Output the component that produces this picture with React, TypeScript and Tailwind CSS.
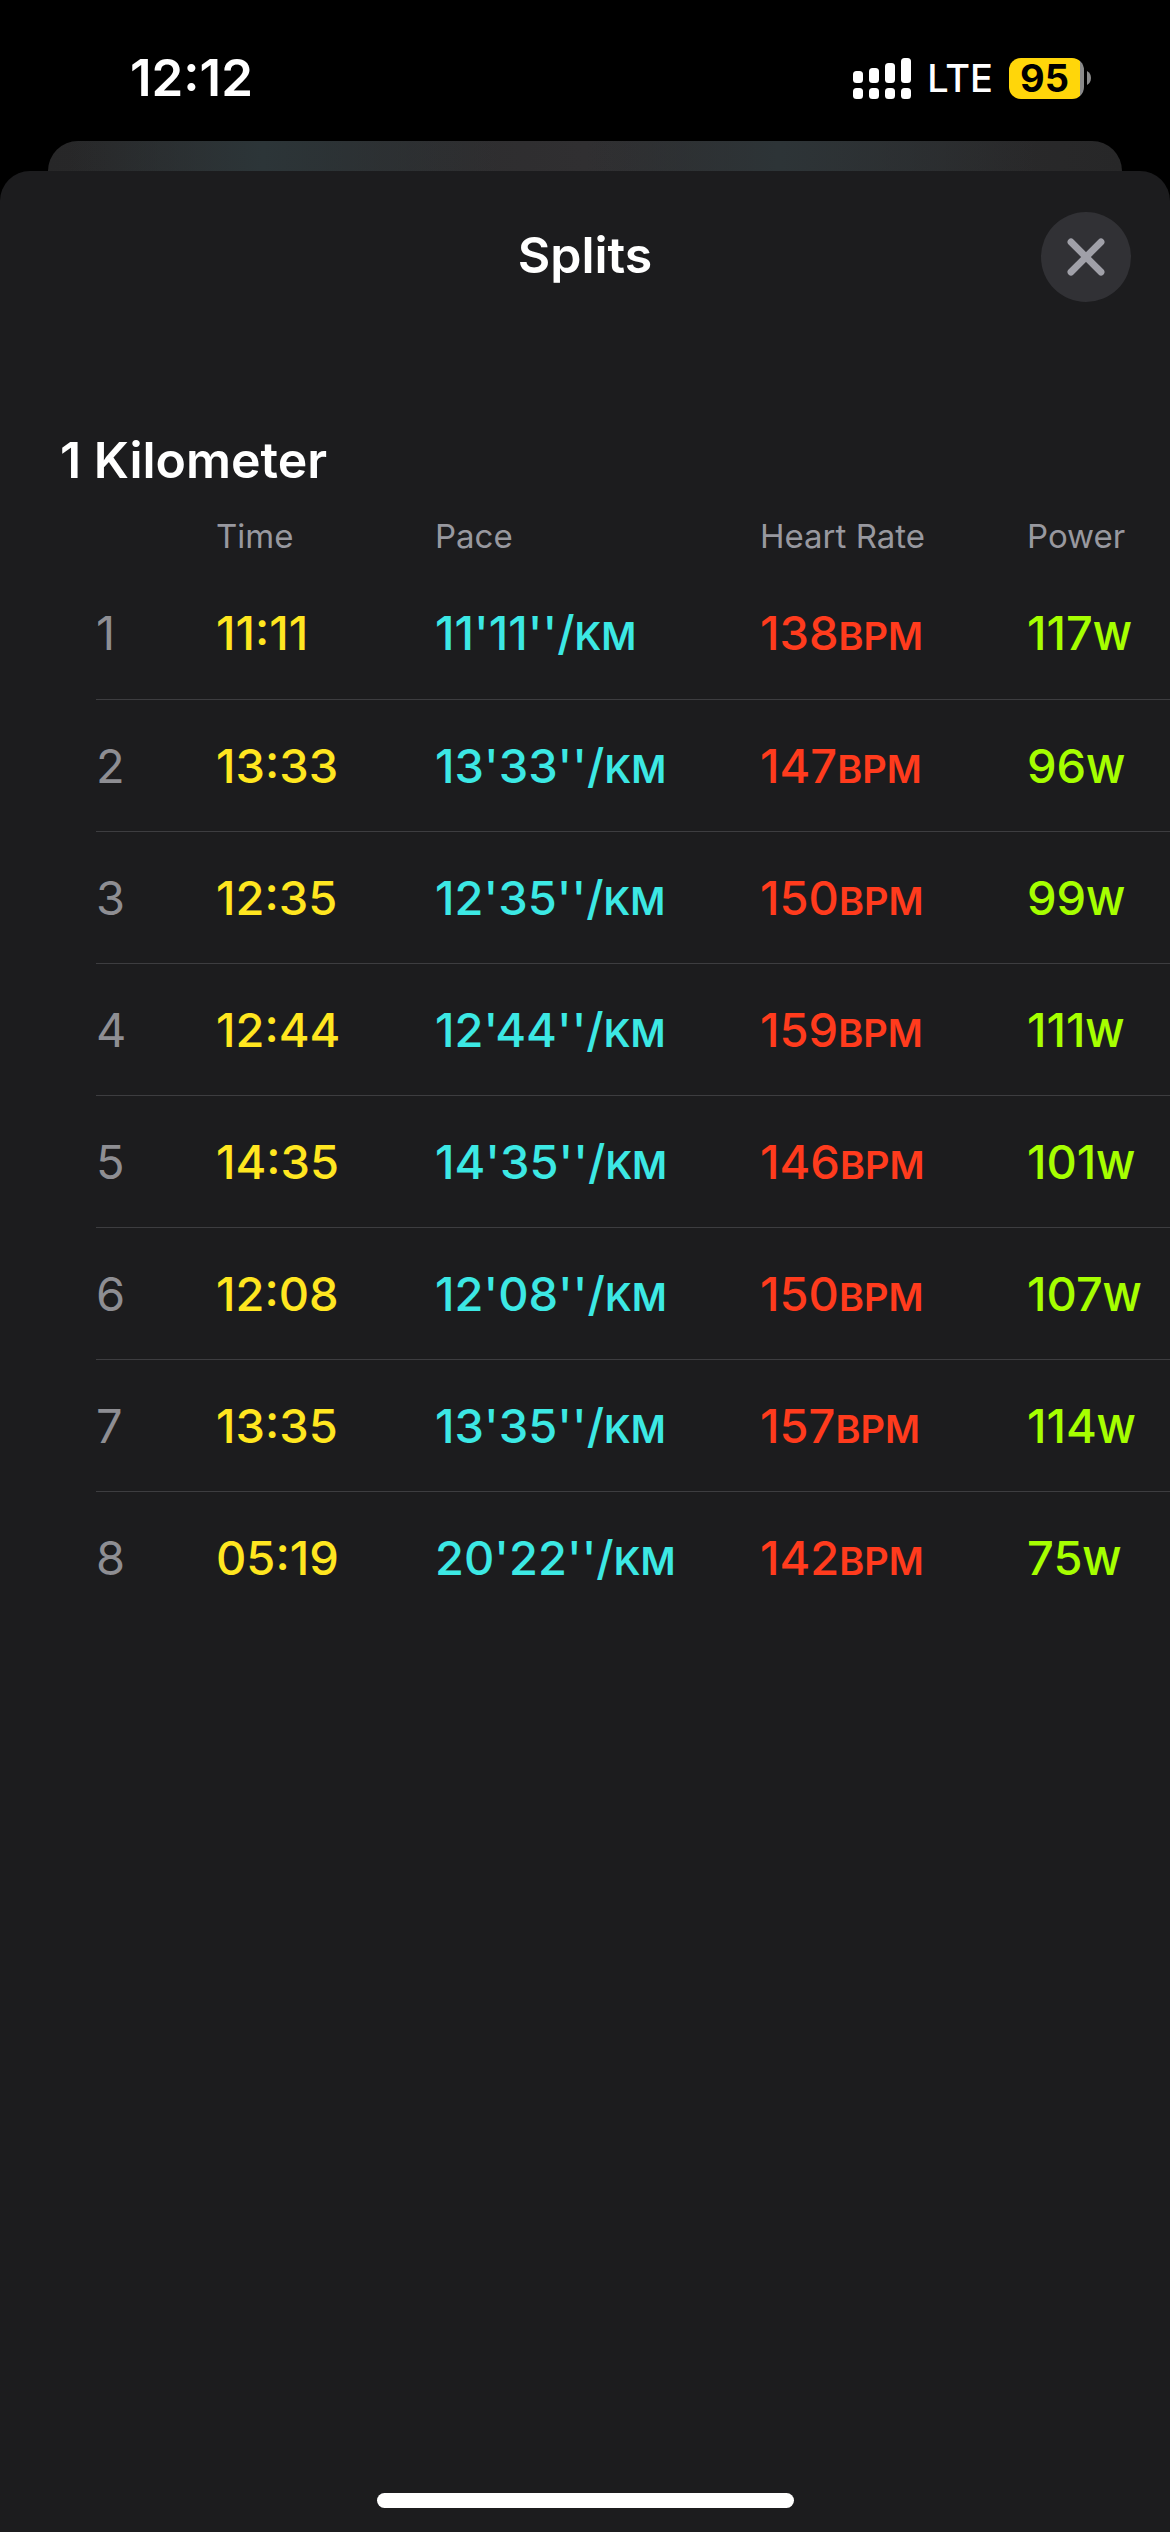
import { X } from "lucide-react";

interface Split {
  time: string;
  pace: string;
  heartRate: number;
  power: number;
}

const SPLITS: Split[] = [
  { time: "11:11", pace: "11'11''", heartRate: 138, power: 117 },
  { time: "13:33", pace: "13'33''", heartRate: 147, power: 96 },
  { time: "12:35", pace: "12'35''", heartRate: 150, power: 99 },
  { time: "12:44", pace: "12'44''", heartRate: 159, power: 111 },
  { time: "14:35", pace: "14'35''", heartRate: 146, power: 101 },
  { time: "12:08", pace: "12'08''", heartRate: 150, power: 107 },
  { time: "13:35", pace: "13'35''", heartRate: 157, power: 114 },
  { time: "05:19", pace: "20'22''", heartRate: 142, power: 75 },
];

// Top edge of each signal bar; all of them end at the same baseline.
const SIGNAL_TOPS = [13, 10, 5, 0];

function SignalIcon() {
  return (
    <svg width="58" height="41" viewBox="0 0 58 41" fill="white" aria-hidden="true">
      {SIGNAL_TOPS.map((top, i) => (
        <g key={top}>
          <rect x={i * 16} y={top} width="10" height={25 - top} rx="3.5" />
          <rect x={i * 16} y="30" width="10" height="11" rx="3.5" />
        </g>
      ))}
    </svg>
  );
}

function Battery({ level }: { level: number }) {
  return (
    <div className="flex items-center gap-[3px]">
      <span className="flex h-[41px] w-[75px] items-center justify-center rounded-xl bg-linear-to-r from-[#ffd60a] from-95% to-[#8a8a8a] to-95% pr-1 text-[38px] leading-none font-bold text-black">
        {level}
      </span>
      <svg width="4" height="14" viewBox="0 0 4 14" fill="#8a8a8a" aria-hidden="true">
        <path d="M0 0C2.5 1.2 4 3.8 4 7S2.5 12.8 0 14Z" />
      </svg>
    </div>
  );
}

function StatusBar() {
  return (
    <header className="flex h-[141px] items-start justify-between pt-12 pr-[79px] pl-[130px]">
      <span className="text-[51px] leading-[60px] font-semibold">12:12</span>
      <div className="flex h-[60px] items-center gap-4">
        <SignalIcon />
        <span className="text-[38px] leading-none font-medium">LTE</span>
        <Battery level={95} />
      </div>
    </header>
  );
}

function Unit({ children }: { children: string }) {
  return <span className="text-[38px] font-semibold">{children}</span>;
}

function SplitsTable() {
  return (
    <div className="overflow-hidden pl-24">
      <table className="w-full table-fixed text-left whitespace-nowrap">
        <colgroup>
          <col className="w-[120px]" />
          <col className="w-[219px]" />
          <col className="w-[325px]" />
          <col className="w-[267px]" />
          <col />
        </colgroup>
        <thead>
          <tr className="h-[62px] align-top text-[33px] leading-[62px] text-[#98989f]">
            <th aria-label="Split" />
            <th className="font-normal">Time</th>
            <th className="font-normal">Pace</th>
            <th className="font-normal">Heart Rate</th>
            <th className="font-normal">Power</th>
          </tr>
        </thead>
        <tbody>
          {SPLITS.map((split, i) => (
            <tr
              key={i}
              className="h-[132px] border-b border-[#3d3d40] text-[47px] leading-none font-medium last:border-b-0"
            >
              <th className="font-normal text-[#8e8e93]">{i + 1}</th>
              <td className="text-[#ffe620]">{split.time}</td>
              <td className="text-[#3ce8e4]">
                {split.pace}/<Unit>KM</Unit>
              </td>
              <td className="text-[#ff3b1d]">
                {split.heartRate}
                <Unit>BPM</Unit>
              </td>
              <td className="text-[#a6ff00]">
                {split.power}
                <Unit>W</Unit>
              </td>
            </tr>
          ))}
        </tbody>
      </table>
    </div>
  );
}

export default function App() {
  return (
    <div className="flex min-h-screen flex-col bg-black font-['Inter',sans-serif] text-white">
      <StatusBar />

      {/* Sheet underneath, only its top edge shows */}
      <div className="mx-12 h-[30px] rounded-t-[30px] bg-linear-to-r from-[#272728] via-[#302f31] via-50% to-[#272728]">
        <div className="h-full rounded-t-[30px] bg-linear-to-r from-transparent from-2% via-[#2c3538] via-20% to-transparent to-42%">
          <div className="h-full rounded-t-[30px] bg-linear-to-r from-transparent from-50% via-[#2d3437] via-68% to-transparent to-92%" />
        </div>
      </div>

      <main className="flex flex-1 flex-col rounded-t-[30px] bg-[#1c1c1e]">
        <div className="grid grid-cols-[1fr_auto_1fr] items-start px-[39px] pt-[41px]">
          <h1 className="col-start-2 text-[50px] leading-[86px] font-semibold">Splits</h1>
          <button
            type="button"
            aria-label="Close"
            className="flex size-[90px] items-center justify-center justify-self-end rounded-full bg-[#313135] text-[#a0a0a8]"
          >
            <X size={60} strokeWidth={2.75} />
          </button>
        </div>

        <h2 className="pt-[128px] pl-[60px] text-[50px] leading-[60px] font-semibold">1 Kilometer</h2>
        <div className="pt-[15px]">
          <SplitsTable />
        </div>

        <div className="mt-auto flex justify-center pb-6">
          <div className="h-[15px] w-[417px] rounded-full bg-white" />
        </div>
      </main>
    </div>
  );
}
